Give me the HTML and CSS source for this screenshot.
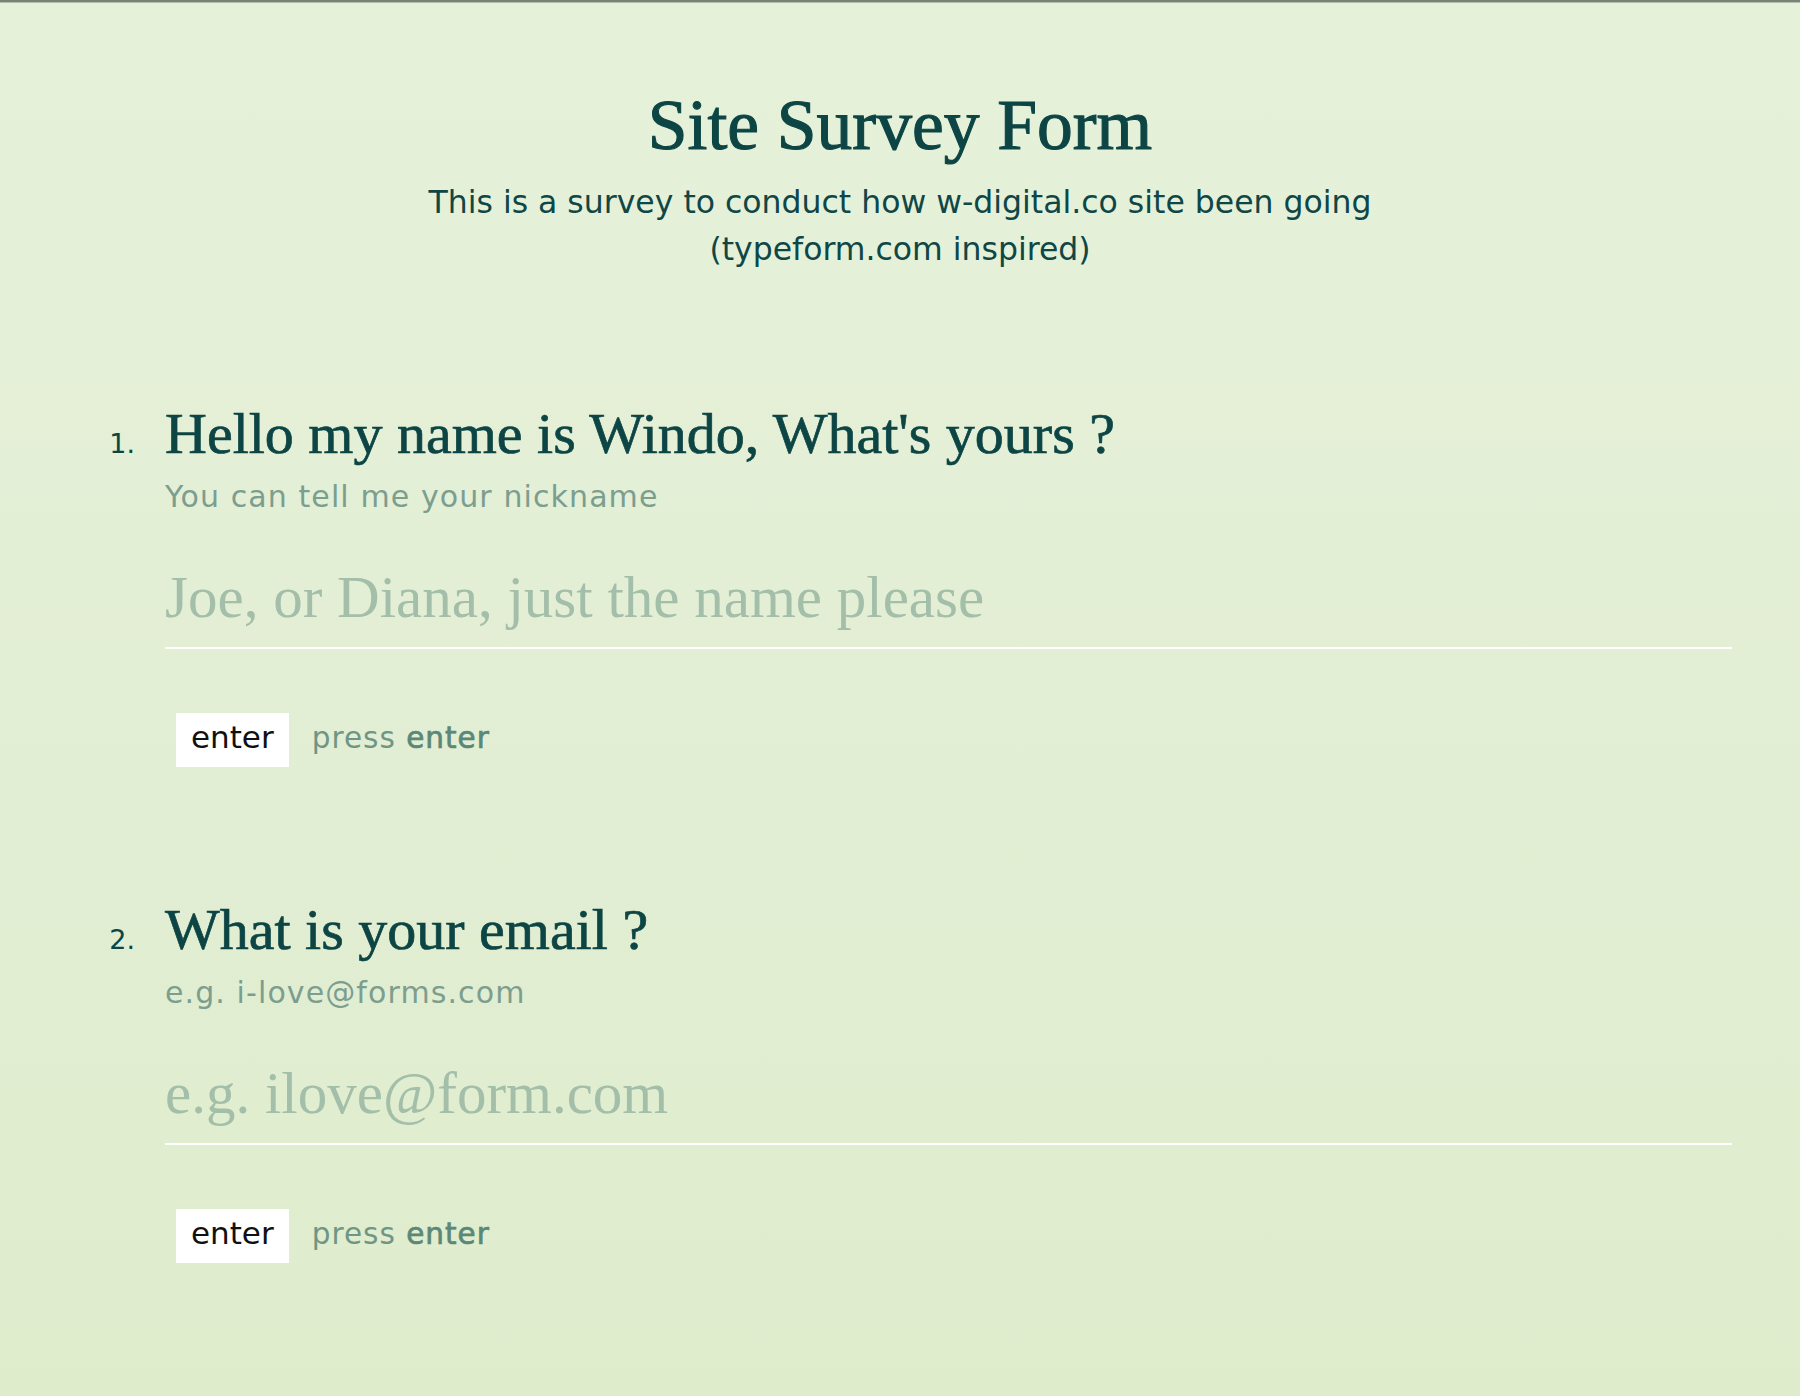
FILE: index.html
```html
<!DOCTYPE html>
<html lang="en">
<head>
<meta charset="utf-8">
<title>Site Survey Form</title>
<link rel="stylesheet" href="styles.css">
</head>
<body>
<div class="chrome"></div>
<main class="survey">
  <header class="intro">
    <h1 class="title">Site Survey Form</h1>
    <p class="lead">This is a survey to conduct how w-digital.co site been going (typeform.com inspired)</p>
  </header>
  <form class="form">
    <ol class="questions">
      <li class="question">
        <span class="q-num">1.</span>
        <div class="q-body">
          <label class="q-title" for="name">Hello my name is Windo, What's yours ?</label>
          <p class="q-hint">You can tell me your nickname</p>
          <input class="q-input" id="name" type="text" placeholder="Joe, or Diana, just the name please">
          <div class="q-actions">
            <button class="btn-enter" type="button">enter</button>
            <span class="q-press">press <strong>enter</strong></span>
          </div>
        </div>
      </li>
      <li class="question">
        <span class="q-num">2.</span>
        <div class="q-body">
          <label class="q-title" for="email">What is your email ?</label>
          <p class="q-hint">e.g. i-love@forms.com</p>
          <input class="q-input" id="email" type="email" placeholder="e.g. ilove@form.com">
          <div class="q-actions">
            <button class="btn-enter" type="button">enter</button>
            <span class="q-press">press <strong>enter</strong></span>
          </div>
        </div>
      </li>
    </ol>
  </form>
</main>
</body>
</html>
```

FILE: styles.css
```css
html {
  min-height: 100%;
  background: linear-gradient(to bottom, #e6f1da 0%, #e2eed3 60%, #dfeccc 100%);
}

body {
  margin: 0;
  min-height: 100vh;
  color: #0d4545;
  font-family: "DejaVu Sans", "Noto Sans", sans-serif;
}

.chrome {
  height: 3px;
  background: linear-gradient(to bottom, #7b8277 0, #7b8277 2px, #b6c1ad 2px, #b6c1ad 3px);
}

.survey {
  padding-top: 86px;
}

.intro {
  text-align: center;
}

.title {
  margin: 0;
  font-family: "Liberation Serif", serif;
  font-weight: normal;
  font-size: 71.5px;
  line-height: 71px;
  color: #0d4545;
  -webkit-text-stroke: 1.1px #0d4545;
}

.lead {
  margin: 19px auto 0;
  max-width: 1000px;
  font-size: 31.5px;
  line-height: 47px;
  color: #0f4646;
}

.form {
  width: 1664px;
  margin: 126px auto 0;
}

.questions {
  list-style: none;
  margin: 0;
  padding: 0;
}

.question {
  display: grid;
  grid-template-columns: 97px 1fr;
  align-items: baseline;
}

.question + .question {
  margin-top: 128px;
}

.q-num {
  text-align: right;
  padding-right: 30px;
  font-size: 27px;
  color: #0d4545;
}

.q-body {
  display: flex;
  flex-direction: column;
}

.q-title {
  font-family: "Liberation Serif", serif;
  font-size: 58px;
  line-height: 70px;
  color: #0d4545;
  -webkit-text-stroke: 0.7px #0d4545;
}

.q-hint {
  margin: 8px 0 0;
  font-size: 30px;
  line-height: 40px;
  letter-spacing: 1.1px;
  color: #7c9e8f;
}

.q-input {
  margin: 46px 0 0;
  padding: 0 0 15px 0;
  width: 100%;
  box-sizing: border-box;
  border: 0;
  border-bottom: 2px solid #ffffff;
  background: transparent;
  outline: none;
  font-family: "Liberation Serif", serif;
  font-size: 59px;
  line-height: normal;
  color: #0d4545;
}

.q-input::placeholder {
  color: #a3bea9;
  opacity: 1;
}

.q-actions {
  display: flex;
  align-items: baseline;
  gap: 23px;
  margin-top: 64px;
  padding-left: 11px;
}

.btn-enter {
  height: 54px;
  padding: 0 15px 6px;
  border: 0;
  border-radius: 0;
  background: #ffffff;
  font-family: "DejaVu Sans", sans-serif;
  font-size: 31px;
  line-height: 48px;
  color: #111111;
  cursor: pointer;
}

.q-press {
  font-size: 29.5px;
  letter-spacing: 1px;
  color: #6f9685;
}

.q-press strong {
  font-weight: normal;
  color: #5a8877;
  -webkit-text-stroke: 0.7px #5a8877;
}
```
